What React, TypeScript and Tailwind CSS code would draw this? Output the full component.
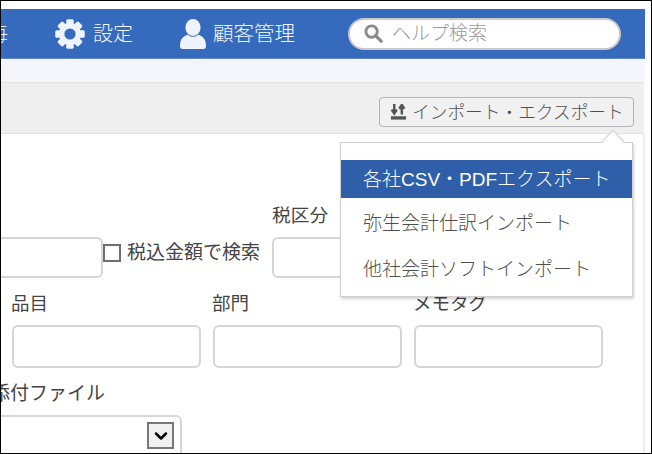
import { ChevronDown } from 'lucide-react';

function GearIcon() {
  const teeth = [0, 45, 90, 135, 180, 225, 270, 315];
  return (
    <svg viewBox="0 0 30 30" className="w-[30px] h-[30px]">
      {teeth.map((a) => (
        <rect key={a} x="11.5" y="0.5" width="7" height="29" rx="1.2" fill="#eef3fd" transform={`rotate(${a} 15 15)`} />
      ))}
      <circle cx="15" cy="15" r="11" fill="#eef3fd" />
      <circle cx="15" cy="15" r="5.6" fill="#356ABD" />
    </svg>
  );
}

function UserIcon() {
  return (
    <svg viewBox="0 0 26 30" className="w-[26px] h-[30px]">
      <ellipse cx="13" cy="8.5" rx="7.6" ry="8.5" fill="#eef3fd" />
      <path d="M8 15.5C3.5 17 .5 20 .2 24.5L0 27.5C0 29 1 30 2.5 30h21c1.500 0 2.500-1 2.500-2.500l-.2-3C25.500 20 22.500 17 18 15.500c-1.300 1.400-3 2.300-5 2.300s-3.700-.9-5-2.300z" fill="#eef3fd" />
    </svg>
  );
}

function Field({ label }: { label: string }) {
  return (
    <div className="w-[189px]">
      <div className="mt-[2px] ml-[-1px] text-[18.500px] leading-[18px] text-[#444]">{label}</div>
      <div className="mt-[12px] h-[43px] rounded-[6px] border-2 border-[#d6d6d6] bg-white" />
    </div>
  );
}

export default function App() {
  return (
    <div
      className="relative h-[454px] w-[652px] overflow-hidden border border-black bg-white pt-2"
      style={{ fontFamily: '"Liberation Sans", "Noto Sans CJK JP", sans-serif' }}
    >
      <header className="mr-[6px] flex h-[50px] items-center justify-between overflow-hidden border-b border-[#5f88cc] bg-[#356ABD] pr-[24px] text-[#f2f6fd]">
        <div className="flex items-center">
          <span className="ml-[-13px] w-[20px] text-[20px] font-light">毎</span>
          <div className="ml-[47px] flex items-center gap-[8px]">
            <GearIcon />
            <span className="text-[20px] font-light leading-[24px]">設定</span>
          </div>
          <div className="ml-[47px] flex items-center gap-[7px]">
            <UserIcon />
            <span className="text-[20.500px] font-light leading-[24px]">顧客管理</span>
          </div>
        </div>
        <div className="flex h-[32px] w-[273px] items-center rounded-full border-2 border-[#c9c9c9] bg-white pl-[14px]">
          <svg viewBox="0 0 20 20" className="h-[19px] w-[19px]">
            <circle cx="8" cy="8" r="6" fill="none" stroke="#8a8a8a" strokeWidth="3" />
            <path d="M12.500 12.500L18 18" stroke="#8a8a8a" strokeWidth="3.400" strokeLinecap="round" />
          </svg>
          <span className="ml-[9px] text-[19px] font-light leading-[24px] text-[#9b9b9b]">ヘルプ検索</span>
        </div>
      </header>

      <div className="mr-[6px] h-[23px] bg-[#f4f6fb]" />

      <div className="mr-[7px] flex h-[52px] items-start justify-end border-y border-[#e2e2e2] bg-[#efefef] pr-[10px] pt-[14px]">
        <div className="flex h-[30px] w-[255px] items-center gap-[5px] rounded-[4px] border border-[#b5b5b5] bg-[#f1f1f1] pl-[10px]">
          <svg viewBox="0 0 18 18" className="h-[17px] w-[17px]">
            <path d="M4.500 0v9M1.800 6L4.500 10l2.700-4M12.500 11V2M9.800 5L12.500 1l2.700 4" fill="none" stroke="#555" strokeWidth="2.600" />
            <rect x="1" y="13" width="16" height="3.500" fill="#555" />
          </svg>
          <span className="mt-[3px] whitespace-nowrap text-[17.700px] font-light leading-none text-[#4f4f4f]">インポート・エクスポート</span>
        </div>
      </div>

      <main className="relative mr-[6px] h-[321px] border-r-2 border-[#efefef] pl-[11px]">
        <div className="flex h-[144px] items-end">
          <div className="ml-[-30px] h-[41px] w-[121px] rounded-[6px] border-2 border-[#d6d6d6]" />
          <div className="mb-[13px] flex items-center gap-[6px]">
            <div className="h-[18px] w-[18px] border-2 border-[#6e6e6e] bg-white" />
            <span className="whitespace-nowrap text-[19px] leading-[24px] text-[#444]">税込金額で検索</span>
          </div>
          <div className="ml-[12px] w-[120px]">
            <div className="text-[18.700px] leading-[18px] text-[#444]">税区分</div>
            <div className="mt-[12px] h-[41px] rounded-[6px] border-2 border-[#d6d6d6]" />
          </div>
        </div>
        <div className="mt-[15px] flex gap-[12px]">
          <Field label="品目" />
          <Field label="部門" />
          <Field label="メモタグ" />
        </div>
        <div className="ml-[-21px] mt-[14px] whitespace-nowrap text-[19px] leading-[24px] text-[#444]">添付ファイル</div>
        <div className="ml-[-21px] mt-[9px] flex h-[50px] w-[191px] justify-end rounded-tr-[6px] border-2 border-[#d6d6d6] pr-[6px] pt-[5px]">
          <div className="flex h-[27px] w-[27px] items-center justify-center border-2 border-[#777] bg-[#f0f0f0]">
            <ChevronDown size={20} strokeWidth={3} className="text-black" />
          </div>
        </div>
      </main>

      <div className="absolute left-[339px] top-[141px] h-[155px] w-[293px] border border-[#cfcfcf] bg-white pt-[17px] shadow-[1px_2px_3px_rgba(0,0,0,0.18)]">
        <div className="absolute right-[11px] top-[-10px] h-[16px] w-[16px] rotate-45 border-l border-t border-[#cfcfcf] bg-white" />
        <div className="relative flex h-[38px] items-center bg-[#2f5fa9] pl-[22px] pt-[2px] text-[19px] font-light text-white">各社CSV・PDFエクスポート</div>
        <div className="flex h-[46px] items-center pl-[22px] pt-[6px] text-[19px] font-light text-[#4f4f4f]">弥生会計仕訳インポート</div>
        <div className="flex h-[44px] items-center pl-[22px] pt-[8px] text-[19px] font-light text-[#4f4f4f]">他社会計ソフトインポート</div>
      </div>
    </div>
  );
}
